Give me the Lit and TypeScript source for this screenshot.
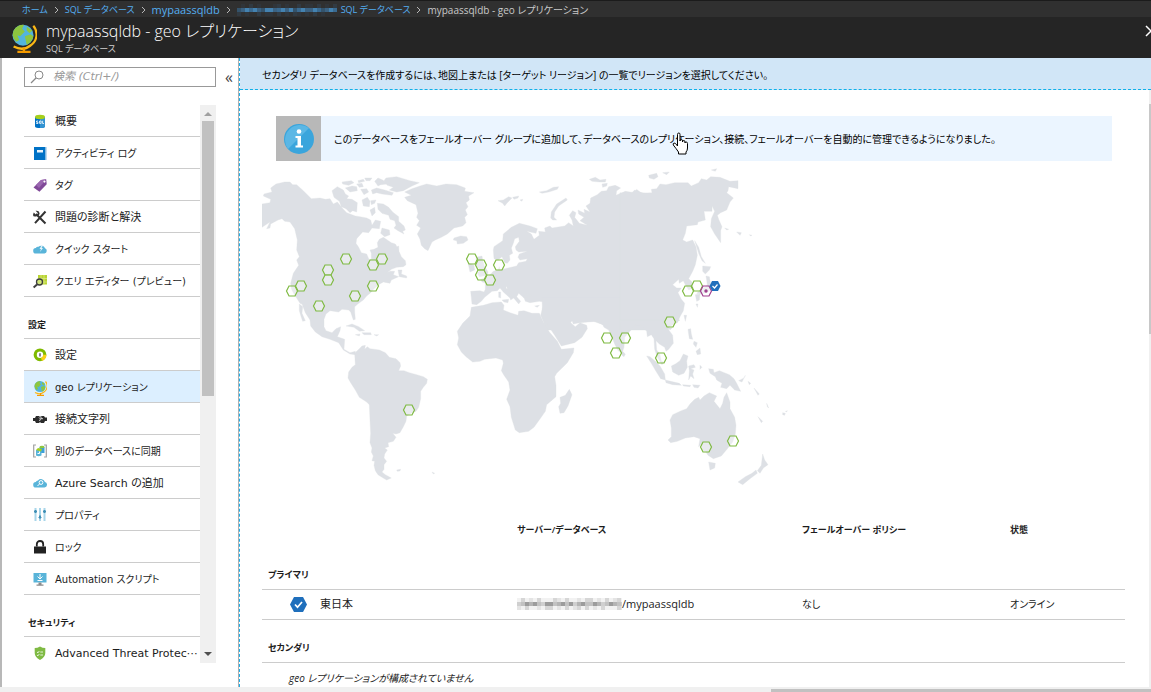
import { LitElement, html, svg, css } from "lit";
import { customElement } from "lit/decorators.js";
import { classMap } from "lit/directives/class-map.js";

const globe = svg`
  <path d="M12.500 1.500a7 7 0 0 1-1.500 10.500Q7 15.200 2 12.500" fill="none" stroke="#fcb714" stroke-width="1.200"/>
  <path d="M7.500 13v2M4 15.400h7" fill="none" stroke="#f59b00" stroke-width="1.300"/>
  <circle cx="7" cy="6.500" r="5.600" fill="#53b4dc"/>
  <path d="M2 4Q4 .8 7.500 1L6.500 3 8 4.500 5.500 7 4 6.500 5 9 3.500 10Q1.500 8 1.500 6ZM9 2l3 2-1.500 1.500L9 4ZM8 7l3-1 1.500 1Q12 10 9 11.700L8.500 9.500Z" fill="#8dc63f"/>`;

const icons: Record<string, unknown> = {
  sql: svg`<path d="M2 3v9.500c0 2 10 2 10 0V3z" fill="#0072c6"/><path d="M7 3h5v9.500c0 1-2.500 1.500-5 1.500z" fill="#3393d2"/><ellipse cx="7" cy="3" rx="5" ry="2.200" fill="#a5cf1b"/><path d="M5.200 7H3.500v1.200h1.500v1.300H3.200M6.500 7h1.600v2.400H6.500zM9.600 6.800v2.700H11" fill="none" stroke="#fff" stroke-width=".8"/>`,
  log: svg`<path d="M1 1h12v13H1z" fill="#0072c6"/><path d="M12 1h1.500v13H12z" fill="#7fb8e2"/><path d="M4 4h6v2.500H4z" fill="#e8f4fc"/>`,
  tag: svg`<path d="M0.500 9.500 8 2 13.200 1.200l.5 5L6.500 13.800z" fill="#804998"/><path d="M3 7 8 2l5.200-.8L6 10z" fill="#9a67b0"/><circle cx="11.500" cy="3.600" r="1.100" fill="#fff"/>`,
  tools: svg`<path d="m3 4 9.500 9.500M12.500 1.500 2 13.200" fill="none" stroke="#333" stroke-width="2"/><path d="M.8 2.500 3.200 5 5 3.300 2.600.8Q6 .2 6.500 3T2.800 6.500.8 2.500" fill="#333"/>`,
  cloud: svg`<path d="M3 11.500a2.700 2.700 0 0 1-.2-5.400 2.600 2.600 0 0 1 2.700-1.300 4 4 0 0 1 6.500 1.500A2.700 2.700 0 0 1 11.500 11.500z" fill="#59b4d9"/><path d="M8.500 3.500 6.500 7H8l-1 3 3-4H8.500l1.500-2.500z" fill="#e6f4fa"/>`,
  query: svg`<path d="M5 1h9v9.500H5z" fill="#b8d432"/><path d="M8 1v9.500M11 1v9.500M5 4.500h9M5 8h9" stroke="#dce98e" stroke-width=".7"/><circle cx="6.500" cy="8" r="3" fill="#cfe47a" stroke="#3e3e3e" stroke-width="1.300"/><path d="m4 10.500-3.400 3" stroke="#3e3e3e" stroke-width="2"/>`,
  gear: svg`<circle cx="7" cy="6.800" r="4.800" fill="#fff" stroke="#7fba00" stroke-width="3.200"/><path d="M11.800 6.800A4.800 4.800 0 0 1 8.500 11.400" fill="none" stroke="#fcd116" stroke-width="3.200"/><path d="M7 5.300v3.200" stroke="#555" stroke-width="1.400"/>`,
  globe,
  plug: svg`<path d="M0 6h2l1-2h3l1 1 1-1h3l1 1.500h2V9h-2l-1 2H8l-1-1-1 1H3L2 9H0z" fill="#2b2b2b"/><path d="M6 5.500 7.500 7 6.500 9M8 4.500v2.200h2" fill="none" stroke="#fff" stroke-width=".8"/>`,
  sync: svg`<path d="M3 1H.7v12H3M11 1h2.300v12H11" fill="none" stroke="#a0a1a2" stroke-width="1.200"/><path d="M6.500 3v6h5V3z" fill="#3a9fd8"/><ellipse cx="9" cy="3" rx="2.500" ry="1.300" fill="#8dc63f"/><path d="M3 6v5.500q2.500 1.500 5.500 0V6z" fill="#59b4d9"/><path d="m3 6 2-2 4 1-1 2.500z" fill="#a5cf1b"/><path d="M4.500 9.500h2V7.500" fill="none" stroke="#fff"/>`,
  search: svg`<path d="M3 11.500a2.700 2.700 0 0 1-.2-5.400 2.600 2.600 0 0 1 2.200-1.600 4 4 0 0 1 6.900 1.500A2.800 2.800 0 0 1 11.500 11.500z" fill="#59b4d9"/><circle cx="8" cy="6.500" r="1.900" fill="none" stroke="#fff"/><path d="M6.700 7.800 4.500 10" stroke="#fff"/>`,
  props: svg`<path d="M2.500 0v13M7 0v13M11.500 0v13" stroke="#a8d6ea" stroke-width="2"/><path d="M2.500 2v3M7 7.500v3M11.500 2v3" stroke="#3f8fb5" stroke-width="2"/><path d="M1 3.500h3M5.500 9.500h3M10 3.500h3" stroke="#3f8fb5"/>`,
  lock: svg`<path d="M1 6.500h12V13.500H1z" fill="#222"/><path d="M3.800 6.500V4.200a3.200 3.200 0 0 1 6.400 0v2.300" fill="none" stroke="#222" stroke-width="1.800"/>`,
  script: svg`<path d="M.5 1h13v9.500H.5z" fill="#59b4d9"/><path d="M7 2v5M4.500 4.500 7 7l2.500-2.500M4.500 8.500h5" fill="none" stroke="#fff"/><path d="M5.500 10.500h3v2h2v1.200h-7v-1.200h2z" fill="#8a8b8c"/>`,
  shield: svg`<path d="M7 .5Q9.500 2 12.300 2v5q0 4-5.300 7-5.300-3-5.300-7V2Q4.500 2 7 .5" fill="#7fba43"/><path d="m4 6 1 .8L6.300 5M7.300 6H10M4 9l1 .8L6.300 8M7.300 9H10" fill="none" stroke="#fff" stroke-width=".8"/>`,
};

const groups = [
  {
    title: "",
    items: [
      ["sql", "概要"],
      ["log", "アクティビティ ログ"],
      ["tag", "タグ"],
      ["tools", "問題の診断と解決"],
      ["cloud", "クイック スタート"],
      ["query", "クエリ エディター (プレビュー)"],
    ],
  },
  {
    title: "設定",
    items: [
      ["gear", "設定"],
      ["globe", "geo レプリケーション"],
      ["plug", "接続文字列"],
      ["sync", "別のデータベースに同期"],
      ["search", "Azure Search の追加"],
      ["props", "プロパティ"],
      ["lock", "ロック"],
      ["script", "Automation スクリプト"],
    ],
  },
  { title: "セキュリティ", items: [["shield", "Advanced Threat Protec⋯"]] },
];

const regions = [
  [346, 259], [328, 270], [328, 280], [301, 286], [292, 291], [373, 265], [382, 259],
  [373, 286], [355, 296], [319, 306], [409, 410], [472, 259], [481, 265], [481, 275],
  [490, 280], [499, 265], [607, 338], [625, 338], [616, 353], [670, 322], [661, 358],
  [688, 291], [697, 286], [706, 447], [733, 441],
];

const hex = "M-5.500 0-3-5H3L5.500 0 3 5H-3Z";

/* Land masses, each drawn in its own frame at three units to the pixel. */
const land = [
  {
    x: 250, y: 160,
    d: `M36 132 60 128 62 118 40 108 42 102 66 96 62 84 78 72 104 66 120 66 128 74 140 74 160 92 184 116 210 114 226 118 240 116 250 132 262 126 280 148 290 158 316 168 330 170 350 174 362 180 366 196 376 180 392 184 388 206 366 204 356 218 338 216 320 236 318 250 326 262 334 278 350 282 358 300 364 298 364 280 360 270 372 268 384 262 382 248 388 238 400 232 412 240 424 248 436 252 441 260 446 258 447 274 454 290 466 302 468 314 460 320 440 322 424 328 410 340 398 346 420 334 434 334 430 344 446 350 424 360 420 370 410 368 400 366 386 374 372 386 362 398 350 408 340 420 326 430 314 440 314 456 316 478 310 480 302 456 296 450 276 448 266 456 240 452 228 462 222 478 222 500 228 512 246 518 258 506 272 500 270 512 262 530 284 538 282 568 300 578 316 574 316 584 300 582 280 570 266 548 240 538 216 530 196 516 182 498 180 480 166 458 156 432 150 430 140 414 134 406 124 386 122 370 130 340 146 316 140 300 148 290 140 270 142 240 134 206 120 186 104 184 96 176 84 180 62 192 60 204 50 206 60 186 36 202Z
      M148 432 158 440 156 460 166 482 158 484 152 466 148 452Z
      M246 92 262 80 280 90 286 102 296 108 290 116 306 118 322 128 320 156 308 152 300 158 288 146 274 140 268 124 252 112Z
      M276 66 304 62 312 68 296 76 278 72ZM286 84 306 78 320 80 322 92 300 96ZM324 62 340 58 344 64 326 68ZM320 72 336 70 340 80 328 82ZM332 88 350 86 356 96 342 104ZM344 54 366 54 360 62 348 62ZM374 64 384 54 398 60 412 72 392 74 384 78ZM408 54 440 50 480 62 508 68 486 78 460 92 440 96 418 90 430 82 412 76 402 62ZM364 90 380 84 404 90 430 98 426 106 396 102 380 98 368 102ZM336 120 352 112 360 124 358 140 340 138ZM362 122 378 120 374 130 364 134ZM360 150 374 142 376 158 366 168ZM382 130 400 132 416 142 428 156 446 170 446 184 462 198 466 210 458 214 462 222 444 212 432 204 438 196 434 182 420 178 416 166 396 160 384 148ZM396 204 418 210 420 224 404 230 392 220Z
      M444 330 456 330 454 342 470 348 470 354 448 350Z
      M464 96 486 86 510 78 530 72 560 78 588 72 620 74 646 84 644 94 672 98 656 108 658 120 648 128 654 140 646 150 652 164 644 172 648 188 638 198 612 204 592 222 574 232 556 240 546 246 534 272 524 266 514 256 510 238 502 222 512 204 500 196 508 182 500 172 504 160 498 134 472 122 464 112 484 106Z
      M612 234 632 228 650 230 654 240 640 250 622 252 620 242 610 240Z
      M288 498 306 492 326 500 344 512 328 514 312 502ZM336 518 362 518 364 524 342 524ZM316 524 330 522 328 528ZM372 524 386 524 380 528Z`,
  },
  {
    x: 250, y: 320,
    d: `M328 86 336 78 346 76 344 88 352 80 360 86 388 90 406 98 418 112 438 116 450 128 452 138 446 152 462 152 478 158 500 164 520 170 532 178 530 190 520 202 512 214 512 236 506 262 498 274 484 280 470 288 468 304 460 320 450 338 438 342 428 340 438 352 430 364 414 368 416 380 404 384 412 390 404 402 402 414 410 424 402 434 402 448 396 456 406 464 424 474 410 480 396 472 384 464 376 452 372 436 374 424 366 422 370 408 364 396 366 384 360 368 362 340 360 300 358 254 350 246 328 232 316 210 302 188 294 174 296 156 306 142 316 134 314 100Z
      M440 450 452 448 450 453 442 454ZM546 456 554 460 550 462Z`,
  },
  {
    x: 450, y: 160,
    d: `M62 394 90 392 102 396 106 388 106 368 96 366 92 358 106 354 120 344 130 334 144 330 148 320 150 330 174 324 200 318 206 308 228 304 232 296 210 300 204 292 208 282 232 274 206 276 198 270 196 260 208 244 206 232 194 236 190 250 184 264 188 280 178 286 180 300 172 310 164 308 156 290 144 300 132 296 130 270 132 260 158 242 160 222 184 202 208 190 240 198 262 206 258 220 230 214 244 222 252 238 268 226 266 214 286 216 284 204 300 198 306 204 344 198 356 188 370 198 366 180 358 166 368 152 378 158 374 172 388 190 412 196 390 182 402 172 386 162 384 150 404 160 402 148 420 156 408 138 420 130 422 114 442 104 454 94 470 92 476 80 496 76 512 84 500 92 498 106 526 94 554 98 560 88 572 98 600 100 600 510 590 500 568 496 548 500 530 510 490 510 476 506 460 494 430 484 400 486 370 484 362 474 348 460 352 478 370 500 376 510 290 510 272 466 282 426 268 424 240 428 226 424 220 408 228 402 244 404 242 410 222 414 206 400 200 410 212 424 206 432 196 420 186 408 174 396 170 378 168 384 188 400 194 412 182 420 180 414 160 396 150 384 142 392 126 394 116 402 104 412 94 424 80 434 66 432Z
      M54 308 72 316 74 330 60 336ZM78 292 96 288 98 300 102 316 114 336 112 346 88 350 82 340 90 330 80 318Z
      M302 174 304 156 320 132 348 114 352 120 326 138 314 156 312 172 320 180 308 180ZM144 122 160 120 176 110 186 114 172 128 164 138 158 130ZM188 112 206 108 204 114 192 118ZM210 120 218 118 216 124ZM268 96 290 92 310 82 326 80 322 88 296 96 276 100ZM418 58 436 52 450 60 468 58 466 66 448 66 426 64ZM456 72 472 70 470 78 458 82Z
      M156 420 176 418 174 428 162 426ZM146 396 152 396 152 414 146 412ZM254 438 268 436 262 442Z`,
  },
  {
    x: 450, y: 290,
    d: `M64 52 100 46 126 38 154 36 162 46 160 60 180 68 204 76 206 64 222 62 246 70 268 70 280 96 298 126 322 154 334 178 372 174 370 188 352 218 320 250 314 260 318 286 318 320 290 344 286 364 272 384 252 412 236 424 208 428 196 420 184 382 180 350 170 328 180 300 176 276 162 256 154 242 160 220 158 210 138 204 118 206 104 208 90 214 68 216 48 200 34 186 22 164 26 144 22 124 38 100 60 78Z
      M278 80 276 20 600 20 600 130 586 112 576 106 556 104 540 124 524 142 522 172 516 190 504 182 494 162 486 142 476 120 462 112 458 104 438 94 388 98 370 102 366 92 362 98 376 110 390 98 410 106 412 116 396 142 374 158 334 168 314 136 298 112 284 90Z
      M358 298 366 314 354 348 342 368 330 370 326 350 332 340 330 322 346 316ZM516 182 526 192 522 200 516 196Z`,
  },
  {
    x: 620, y: 160,
    d: `M0 98 30 104 44 90 70 100 96 98 94 88 110 86 120 72 138 74 164 68 204 68 214 78 236 68 244 56 260 60 272 50 300 52 330 64 354 62 354 86 326 80 324 92 320 98 340 114 330 126 320 150 302 158 292 166 296 178 306 200 302 212 302 248 284 222 272 200 274 176 284 154 276 138 276 154 252 154 256 180 234 186 232 194 200 198 196 220 188 240 200 246 218 240 228 260 232 286 226 314 218 334 206 356 216 366 220 384 206 390 196 374 190 362 178 370 176 358 158 374 170 384 184 384 174 398 184 418 194 430 190 452 180 470 172 488 150 496 144 510 0 510Z
      M224 242 236 262 244 290 256 310 246 302 236 280ZM248 318 272 320 268 330 256 342 248 334ZM258 348 268 350 272 372 280 384 264 396 244 402 230 400 250 384 262 376 260 360ZM226 404 240 402 238 420 230 424ZM228 432 234 432 232 442ZM192 466 200 466 196 484ZM146 504 156 504 150 510Z
      M86 46 110 40 114 50 102 58 88 54ZM128 38 148 36 140 44ZM274 30 290 26 286 34ZM314 204 326 208 320 210ZM350 216 364 218 360 226ZM388 224 396 226 392 228Z`,
  },
  {
    x: 620, y: 320,
    d: `M0 0 180 0 170 6 156 16 146 20 138 18 148 32 158 46 160 70 146 88 138 94 134 82 118 72 108 62 110 90 120 104 124 124 132 126 126 134 112 112 104 88 102 56 94 44 82 50 80 34 62 14 46 14 26 30 6 48Z
      M80 108 90 110 106 124 120 138 134 162 136 180 122 176 108 154 94 130ZM136 180 152 184 178 190 184 196 158 194 138 188ZM188 194 212 196 210 200 190 198ZM218 194 240 196 234 204 222 202ZM154 138 166 132 180 122 190 102 204 108 200 124 202 142 192 160 176 166 158 156ZM206 138 222 134 226 142 212 146 222 150 218 162 222 176 212 168 206 180 208 152ZM204 28 212 26 214 42 218 58 208 56ZM222 64 232 68 228 82 220 72ZM228 94 240 84 242 102 232 104ZM240 136 246 142 240 148ZM266 146 280 148 282 158 298 152 328 164 342 176 350 190 362 214 344 210 330 196 320 206 302 202 306 190 290 180 286 170 270 160ZM356 182 372 174 376 166 366 186ZM384 184 392 190 388 194ZM402 204 418 222 414 226ZM414 290 428 304 424 308Z
      M150 300 158 284 184 272 200 266 210 252 224 238 236 232 240 240 252 228 268 218 290 228 282 244 300 266 308 250 312 232 320 218 330 246 330 266 344 292 348 316 346 342 338 366 324 384 304 408 280 416 264 406 258 396 246 390 244 372 236 380 240 356 222 350 196 354 172 364 152 368 144 360 154 350 154 324Z
      M266 426 286 430 284 444 270 450ZM428 402 434 420 444 434 430 444 420 460 412 452 424 436ZM408 450 412 460 390 476 368 494 354 486 376 470 396 460ZM488 278 496 280 494 286 488 284ZM496 274 502 272 500 276ZM440 250 446 264 442 260Z`,
  },
];

/* A masked name: a soft band of tiles, darkest along the middle row. */
function mosaic(w: number, edge: string[], middle: string[]) {
  const seq = [0, 2, 3, 1, 3, 2, 0, 3, 3, 2, 1, 3, 2, 3, 0, 1, 3, 2, 2, 3, 1, 0, 2, 3, 1, 2];
  const cells = [];
  for (let c = 0; c * 4 < w; c++)
    for (let r = 0; r < 3; r++) {
      const tone = r === 1 ? middle[seq[c % seq.length]] : edge[seq[(c + r * 5) % seq.length] % edge.length];
      cells.push(svg`<rect x=${c * 4} y=${r * 4} width="4" height="4" fill=${tone}/>`);
    }
  return html`<svg class="mosaic" width=${w} height="12" aria-hidden="true">${cells}</svg>`;
}

@customElement("app-root")
export class AppRoot extends LitElement {
  static styles = css`
    :host {
      display: flex;
      flex-direction: column;
      height: 100vh;
      overflow: hidden;
      background: #fff;
      color: #1c1c1c;
      font: 11px/16px "Open Sans", "Noto Sans CJK JP", sans-serif;
      font-feature-settings: "palt";
      font-kerning: normal;
    }
    * { box-sizing: border-box; }
    a { color: inherit; text-decoration: none; }
    button { border: 0; padding: 0; background: none; font: inherit; color: inherit; }
    .crumbs {
      display: flex;
      align-items: center;
      height: 17px;
      padding: 2px 0 0 22px;
      gap: 6px;
      background: #303030;
      border-top: 1px solid #1b1b1b;
      color: #c8c8c8;
      white-space: nowrap;
      font-size: 10px;
      flex: none;
    }
    .crumbs a { color: #54aef0; font-size: 9px; }
    .crumbs .latin { font-size: 11px; }
    .crumbs .pair { display: flex; align-items: center; gap: 4px; }
    .mosaic { display: block; flex: none; }
    .head {
      display: flex;
      align-items: center;
      height: 41px;
      padding: 0 0 0 9px;
      gap: 9px;
      background: #252525;
      color: #fff;
      flex: none;
      overflow: hidden;
    }
    .head svg { flex: none; }
    .names { flex: 1; white-space: nowrap; }
    h1 { margin: 0; font-size: 16px; line-height: 22px; font-weight: 300; }
    .names p { margin: 0; font-size: 9px; line-height: 13px; color: #d0d0d0; }
    .close { width: 6px; height: 12px; margin-bottom: 14px; overflow: hidden; }
    .body { display: flex; flex: 1; min-height: 0; }
    nav {
      display: flex;
      flex-direction: column;
      width: 239px;
      flex: none;
      padding: 9px 0 24px 22px;
      border-left: 2px solid #b8b8b8;
      border-right: 1px solid #b0b0b0;
    }
    .find { display: flex; align-items: center; gap: 9px; }
    .box {
      display: flex;
      align-items: center;
      width: 192px;
      height: 20px;
      gap: 8px;
      padding-left: 5px;
      border: 1px solid #999;
    }
    .box input {
      flex: 1;
      min-width: 0;
      border: 0;
      padding: 0;
      outline: 0;
      font: italic 11px/16px "DejaVu Sans", "Noto Sans CJK JP", sans-serif;
    }
    .box input::placeholder { color: #999; opacity: 1; }
    .fold { color: #444; font-size: 16px; line-height: 16px; }
    .menu { display: flex; flex: 1; min-height: 0; margin-top: 18px; width: 192px; }
    .list { flex: 1; min-width: 0; overflow: hidden; font-family: "DejaVu Sans", "Noto Sans CJK JP", sans-serif; }
    .list ul { list-style: none; margin: 0; padding: 0; }
    .list h2 {
      margin: 0;
      height: 42px;
      padding: 20px 4px 0;
      border-bottom: 1px solid #ccc;
      font-size: 9px;
      line-height: 16px;
      font-weight: 700;
    }
    .item {
      display: flex;
      align-items: center;
      height: 32px;
      padding: 3px 0 0 9px;
      gap: 8px;
      border-bottom: 1px solid #ccc;
      white-space: nowrap;
    }
    .item svg { flex: none; }
    .item.kana { font-size: 10px; }
    .item.on { background: #dcefff; }
    .bar { display: flex; flex-direction: column; align-items: center; width: 16px; background: #f0f0f0; }
    .bar svg { flex: none; }
    .thumb { width: 12px; height: 275px; background: #c1c1c1; }
    .gap { flex: 1; }
    main {
      display: flex;
      flex-direction: column;
      flex: 1;
      min-width: 0;
      border-left: 1px dashed #20b0e8;
    }
    .notice {
      height: 32px;
      padding: 9px 22px;
      background: #d1e6f7;
      border-bottom: 1px dashed #10b0e8;
      color: #000;
      font-size: 10px;
      line-height: 16px;
      white-space: nowrap;
      flex: none;
    }
    .scroll { display: flex; flex: 1; min-height: 0; }
    .content { flex: 1; min-width: 0; padding: 26px 24px 0 22px; overflow: hidden; }
    .track { width: 2px; background: #f0f0f0; padding-top: 14px; }
    .track i { display: block; height: 230px; background: #c8c8c8; }
    .info {
      position: relative;
      display: flex;
      align-items: center;
      height: 45px;
      gap: 13px;
      margin: 0 13px 0 14px;
      background: #ebf5ff;
      color: #000;
      font-size: 10px;
      white-space: nowrap;
    }
    .badge { display: flex; align-items: center; justify-content: center; width: 45px; height: 45px; background: #b8b8b8; }
    .hand { position: absolute; left: 396px; top: 16px; }
    .map { display: block; margin-top: 7px; }
    table { width: 100%; border-collapse: collapse; table-layout: fixed; }
    th, td { padding: 0; text-align: left; font-weight: 400; white-space: nowrap; }
    thead th { height: 57px; padding-top: 16px; font-weight: 600; font-size: 9px; }
    .where { width: 255px; }
    .server { width: 285px; }
    .policy { width: 208px; }
    .section th { height: 43px; padding: 14px 6px 0; font-weight: 600; font-size: 9px; border-bottom: 1px solid #ccc; }
    .section.first th { height: 39px; padding-top: 12px; }
    .row td { height: 30px; border-bottom: 1px solid #ccc; }
    .row .kana { font-size: 10px; }
    .place { display: flex; align-items: center; gap: 13px; padding-left: 28px; }
    .db { display: flex; align-items: center; }
    .none td { height: 32px; padding-left: 27px; font-size: 10px; font-style: italic; }
    .foot { display: flex; justify-content: flex-end; align-items: flex-end; height: 5px; background: #f0f0f0; flex: none; }
    .foot i { width: 33%; height: 3px; background: #c1c1c1; }
  `;

  private arrow() {
    return html`<svg width="5" height="8" viewBox="0 0 5 8" aria-hidden="true"><path d="m1 1 3 3-3 3" fill="none" stroke="#b8b8b8"/></svg>`;
  }

  private map() {
    return html`<svg class="map" width="530" height="325" viewBox="262 168 530 325" role="img" aria-label="リージョン">
      ${land.map((l) => svg`<path d=${l.d} fill="#dde0e5" stroke="#dde0e5" stroke-width="1" transform="translate(${l.x} ${l.y}) scale(.33333)"/>`)}
      ${regions.map(([x, y]) => svg`<path d=${hex} fill="#fff" fill-opacity=".35" stroke="#7fba43" stroke-width="1.200" transform="translate(${x} ${y})"/>`)}
      <path d=${hex} fill="#fff" fill-opacity=".5" stroke="#a0408f" stroke-width="1.200" transform="translate(706 291)"/>
      <circle cx="706" cy="291" r="1.700" fill="#a0408f"/>
      <path d=${hex} fill="#1f6fbc" transform="translate(715 286)"/>
      <path d="m712.500 286 2 2 3-3.500" fill="none" stroke="#fff" stroke-width="1.200"/>
    </svg>`;
  }

  render() {
    const large = ["sql", "tools", "gear", "plug", "search", "shield"];
    return html`
      <div class="crumbs">
        <a href="#">ホーム</a>${this.arrow()}
        <a href="#">SQL データベース</a>${this.arrow()}
        <a class="latin" href="#">mypaassqldb</a>${this.arrow()}
        <span class="pair">${mosaic(100, ["#303030", "#313a42", "#30353a"], ["#34536b", "#3a6a90", "#3b6282", "#4482b0"])}<a href="#">SQL データベース</a></span>${this.arrow()}
        <span>mypaassqldb - geo レプリケーション</span>
      </div>
      <header class="head">
        <svg width="28" height="30" viewBox="0 0 14 16" aria-hidden="true">${globe}</svg>
        <div class="names">
          <h1>mypaassqldb - geo レプリケーション</h1>
          <p>SQL データベース</p>
        </div>
        <button class="close" aria-label="閉じる">
          <svg width="12" height="12" viewBox="0 0 12 12"><path d="m1 1 10 10M11 1 1 11" stroke="#fff" stroke-width="1.500"/></svg>
        </button>
      </header>
      <div class="body">
        <nav>
          <div class="find">
            <label class="box">
              <svg width="15" height="14" viewBox="0 0 15 14" aria-hidden="true"><circle cx="9" cy="5" r="4" fill="none" stroke="#888"/><path d="M6 8 1 13" stroke="#888" stroke-width="1.300"/></svg>
              <input type="text" placeholder="検索 (Ctrl+/)" aria-label="検索" />
            </label>
            <button class="fold" aria-label="折りたたむ">«</button>
          </div>
          <div class="menu">
            <div class="list">
              ${groups.map((g) => html`
                ${g.title ? html`<h2>${g.title}</h2>` : ""}
                <ul>
                  ${g.items.map(([icon, label]) => html`<li>
                    <a href="#" class=${classMap({ item: true, on: icon === "globe", kana: !large.includes(icon) })}>
                      <svg width="14" height="16" viewBox="0 0 14 16" aria-hidden="true">${icons[icon]}</svg>
                      <span>${label}</span>
                    </a>
                  </li>`)}
                </ul>`)}
            </div>
            <div class="bar">
              <svg width="16" height="16" viewBox="0 0 16 16" aria-hidden="true"><path d="M4 11 8 7l4 4z" fill="#a0a0a0"/></svg>
              <div class="thumb"></div>
              <div class="gap"></div>
              <svg width="16" height="16" viewBox="0 0 16 16" aria-hidden="true"><path d="m4 5 4 4 4-4z" fill="#505050"/></svg>
            </div>
          </div>
        </nav>
        <main>
          <div class="notice">セカンダリ データベースを作成するには、地図上または [ターゲット リージョン] の一覧でリージョンを選択してください。</div>
          <div class="scroll">
            <div class="content">
              <div class="info">
                <span class="badge">
                  <svg width="32" height="32" viewBox="0 0 32 32" aria-hidden="true"><circle cx="16" cy="16" r="15" fill="#3aa5dc"/><path d="M5 26A15 15 0 0 1 26 5Z" fill="#5bb7e5"/><circle cx="16" cy="8.500" r="2.300" fill="#fff"/><path d="M12.500 13H18v9.500h2v2h-7.500v-2h2V15h-2z" fill="#fff"/></svg>
                </span>
                <span>このデータベースをフェールオーバー グループに追加して、データベースのレプリケーション、接続、フェールオーバーを自動的に管理できるようになりました。</span>
                <svg class="hand" width="17" height="23" viewBox="0 0 17 23" aria-hidden="true"><path d="M5.500 14V2.500q0-1.500 1.300-1.500T8 2.500V9q0-1.500 1.300-1.500T10.500 9v1q0-1.500 1.300-1.500T13 10v1q0-1 1.200-1t1.300 1.500V16q0 2.500-1.500 4v2H6.500v-2L4 16.500 1.300 13Q.7 11.500 2 11t3.500 3" fill="#fff" stroke="#000"/></svg>
              </div>
              ${this.map()}
              <table>
                <thead>
                  <tr>
                    <th class="where"></th>
                    <th class="server">サーバー/データベース</th>
                    <th class="policy">フェールオーバー ポリシー</th>
                    <th>状態</th>
                  </tr>
                </thead>
                <tbody>
                  <tr class="section first"><th colspan="4">プライマリ</th></tr>
                  <tr class="row">
                    <td>
                      <div class="place">
                        <svg width="17" height="17" viewBox="0 0 17 17" aria-hidden="true"><path d="M0 8.500 4 1h9l4 7.500L13 16H4z" fill="#1f6fbc"/><path d="m5 8.500 2.500 2.700L12 6" fill="none" stroke="#fff" stroke-width="1.700"/></svg>
                        <span>東日本</span>
                      </div>
                    </td>
                    <td><div class="db">${mosaic(105, ["#f2f2f2", "#e4e4e4", "#d6d6d6"], ["#cfcfcf", "#b4b4b4", "#c2c2c2", "#9c9c9c"])}<span>/mypaassqldb</span></div></td>
                    <td class="kana">なし</td>
                    <td class="kana">オンライン</td>
                  </tr>
                  <tr class="section"><th colspan="4">セカンダリ</th></tr>
                  <tr class="none"><td colspan="4">geo レプリケーションが構成されていません</td></tr>
                </tbody>
              </table>
            </div>
            <div class="track"><i></i></div>
          </div>
        </main>
      </div>
      <div class="foot"><i></i></div>
    `;
  }
}
